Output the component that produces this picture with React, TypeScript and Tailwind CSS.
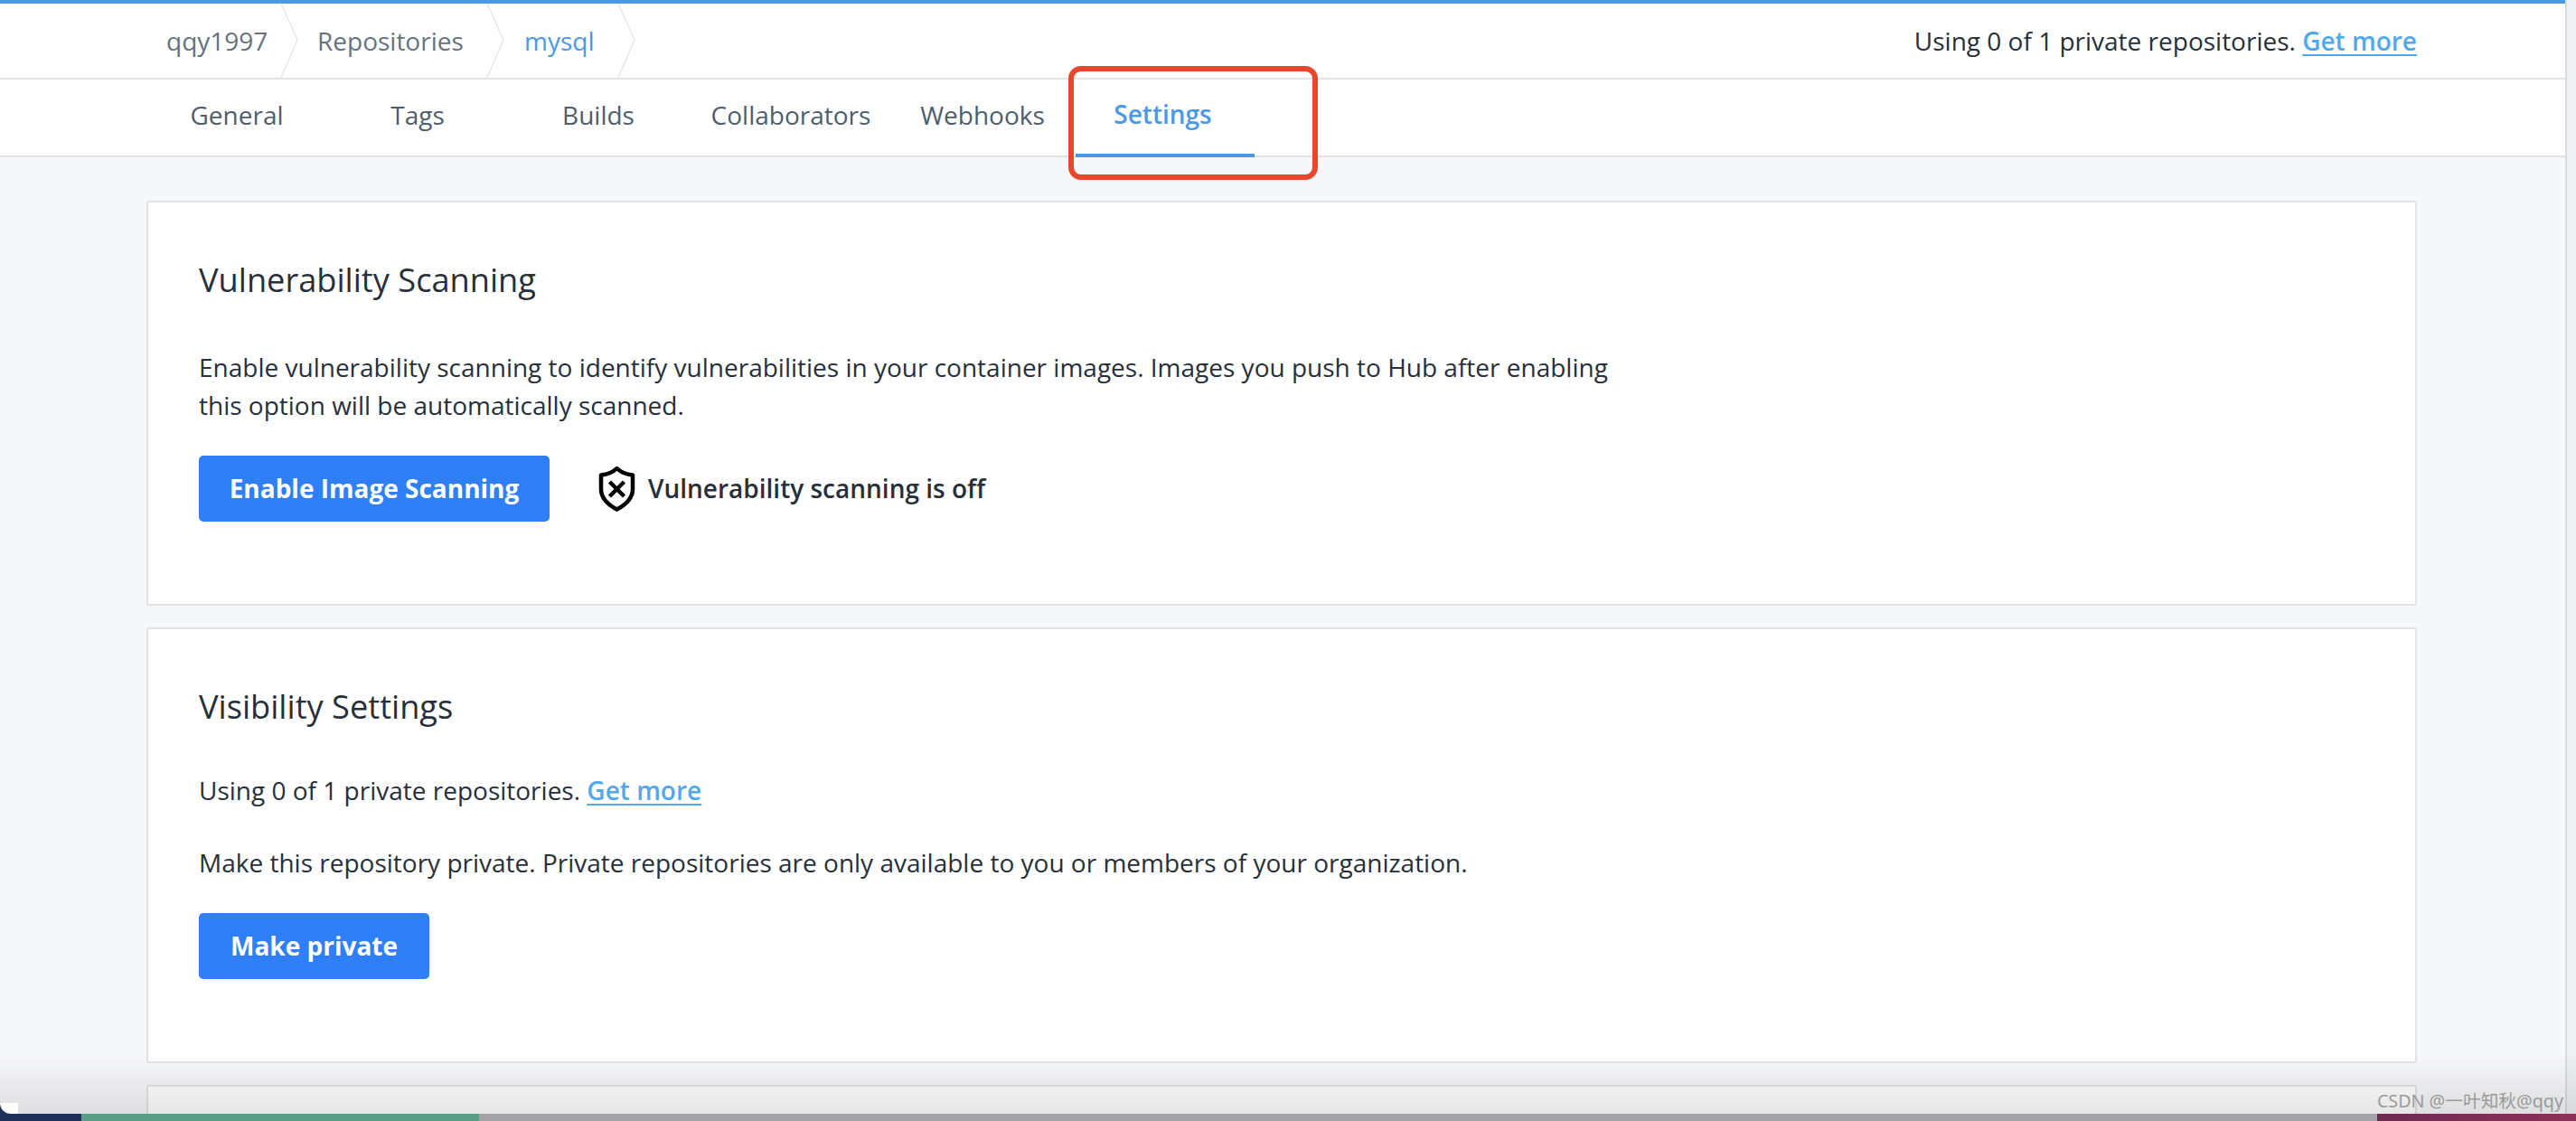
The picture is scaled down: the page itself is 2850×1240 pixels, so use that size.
import React from 'react';

const Chevron = () => (
  <svg width="20" height="82" viewBox="0 0 20 82" className="shrink-0" fill="none">
    <path d="M1 0 L19 40 L1 82" stroke="#e6e8eb" strokeWidth="1.5" />
  </svg>
);

const ShieldX = () => (
  <svg width="41" height="50" viewBox="0 0 41 50" fill="none" className="shrink-0">
    <path d="M20.500 2 C25.500 7 32 9 38 9.500 V25 C38 34 31 42 20.500 47.500 C10 42 3 34 3 25 V9.500 C9 9 15.500 7 20.500 2 Z" stroke="#000" strokeWidth="4.500" strokeLinejoin="round" />
    <path d="M12.500 17 L28.500 33 M28.500 17 L12.500 33" stroke="#000" strokeWidth="4.500" />
  </svg>
);

const Card = ({ className, children }: any) => (
  <div className={`bg-white border-2 border-[#e0e2e6] rounded-[3px] pl-[56px] ${className}`}>
    {children}
  </div>
);

const PrimaryButton = ({ className, children }: any) => (
  <button className={`h-[73px] pb-[2px] bg-[#2e7ff8] rounded-[5px] text-white font-bold text-[28px] ${className}`}>
    {children}
  </button>
);

const GetMore = () => (
  <a className="text-[#52a8ec] font-semibold underline decoration-2 underline-offset-[4px]">Get more</a>
);

const tabs = [
  { label: 'General', className: 'ml-[158px] w-[200px] pl-[8px]' },
  { label: 'Tags', className: 'ml-[4px] w-[200px]' },
  { label: 'Builds', className: 'w-[200px]' },
  { label: 'Collaborators', className: 'ml-[13px] w-[200px]' },
  { label: 'Webhooks', className: 'ml-[12px] w-[200px]' },
];

export default function App() {
  return (
    <div className="relative w-[2850px] h-[1240px] overflow-hidden flex flex-col font-['Open_Sans',sans-serif] text-[#27303a]">
      <div className="flex flex-1 min-h-0">
        <div className="flex-1 min-w-0 flex flex-col bg-[#f6f7f9] overflow-hidden">
          <div className="h-1 bg-[#4a98e6] shrink-0" />

          {/* Breadcrumb */}
          <div className="h-[84px] shrink-0 bg-white border-b-2 border-[#e2e4e7] flex items-center text-[28px] pl-[184px]">
            <span className="w-[126px] text-[#66727f]">qqy1997</span>
            <Chevron />
            <span className="ml-[21px] w-[187px] text-[#66727f]">Repositories</span>
            <Chevron />
            <span className="ml-[22px] w-[103px] text-[#4a98e6]">mysql</span>
            <Chevron />
            <div className="ml-auto pr-[164px] text-[#27303a]">
              Using 0 of 1 private repositories. <GetMore />
            </div>
          </div>

          {/* Tabs */}
          <div className="h-[86px] shrink-0 bg-white border-b-2 border-[#e0e2e6] flex text-[28px] text-[#4e5d6c]">
            {tabs.map((t) => (
              <div key={t.label} className={`flex items-center justify-center pb-[7px] ${t.className}`}>
                {t.label}
              </div>
            ))}
            <div className="ml-[3px] w-[198px] h-[86px] flex items-center justify-center pr-[5px] pb-[7px] text-[#4a98e6] font-semibold border-b-4 border-[#4a98e6]">
              Settings
            </div>
          </div>

          {/* Cards */}
          <div className="flex-1 min-h-0 pt-[48px] pl-[162px] pr-[164px] flex flex-col gap-[24px]">
            <Card className="h-[448px] shrink-0 pt-[60px]">
              <h2 className="text-[36.200px] leading-[50px]">Vulnerability Scanning</h2>
              <p className="mt-[51px] w-[1600px] text-[28px] leading-[42px]">
                Enable vulnerability scanning to identify vulnerabilities in your container images. Images you push to Hub after enabling
                <br />
                this option will be automatically scanned.
              </p>
              <div className="mt-[35px] flex items-center">
                <PrimaryButton className="w-[388px]">Enable Image Scanning</PrimaryButton>
                <div className="ml-[54px] flex items-center gap-[14px] text-[28px] font-semibold">
                  <ShieldX />
                  <span className="pb-[2px]">Vulnerability scanning is off</span>
                </div>
              </div>
            </Card>

            <Card className="h-[482px] shrink-0 pt-[60px]">
              <h2 className="text-[36.200px] leading-[50px]">Visibility Settings</h2>
              <p className="mt-[47px] text-[28px] leading-[42px]">
                Using 0 of 1 private repositories. <GetMore />
              </p>
              <p className="mt-[38px] text-[28px] leading-[42px]">
                Make this repository private. Private repositories are only available to you or members of your organization.
              </p>
              <PrimaryButton className="mt-[35px] w-[255px]">Make private</PrimaryButton>
            </Card>

            <Card className="flex-1 min-h-[60px]"> </Card>
          </div>
        </div>
        <div className="w-[12px] shrink-0 bg-[#eef0f2] border-l-2 border-[#d8dadd]" />
      </div>

      {/* Desktop peeking out under the window */}
      <div className="h-[8px] shrink-0 flex">
        <div className="w-[90px] bg-[#1f3158]" />
        <div className="w-[440px] bg-[#5a9c86]" />
        <div className="flex-1 bg-[#a3a3a6]" />
        <div className="w-[220px] bg-gradient-to-r from-[#6d2a52] to-[#8e3158]" />
      </div>

      {/* Window shadow */}
      <div className="absolute left-0 right-0 bottom-[8px] h-[67px] bg-gradient-to-b from-transparent to-black/10 pointer-events-none" />

      {/* Rounded window corner, bottom left */}
      <div className="absolute left-0 bottom-0 w-[20px] h-[20px] overflow-hidden pointer-events-none bg-[#1f3158]">
        <div className="w-[40px] h-[12px] bg-white rounded-bl-[12px]" />
      </div>

      {/* Red annotation box */}
      <div className="absolute left-[1182px] top-[73px] w-[276px] h-[126px] border-[6px] border-[#e8472e] rounded-[14px] pointer-events-none" />

      {/* Watermark */}
      <div className="absolute right-[14px] bottom-[9px] text-[19.700px] leading-[26px] text-[#9a9a9a] font-['Noto_Sans','Noto_Sans_CJK_SC',sans-serif]">
        CSDN @一叶知秋@qqy
      </div>
    </div>
  );
}
